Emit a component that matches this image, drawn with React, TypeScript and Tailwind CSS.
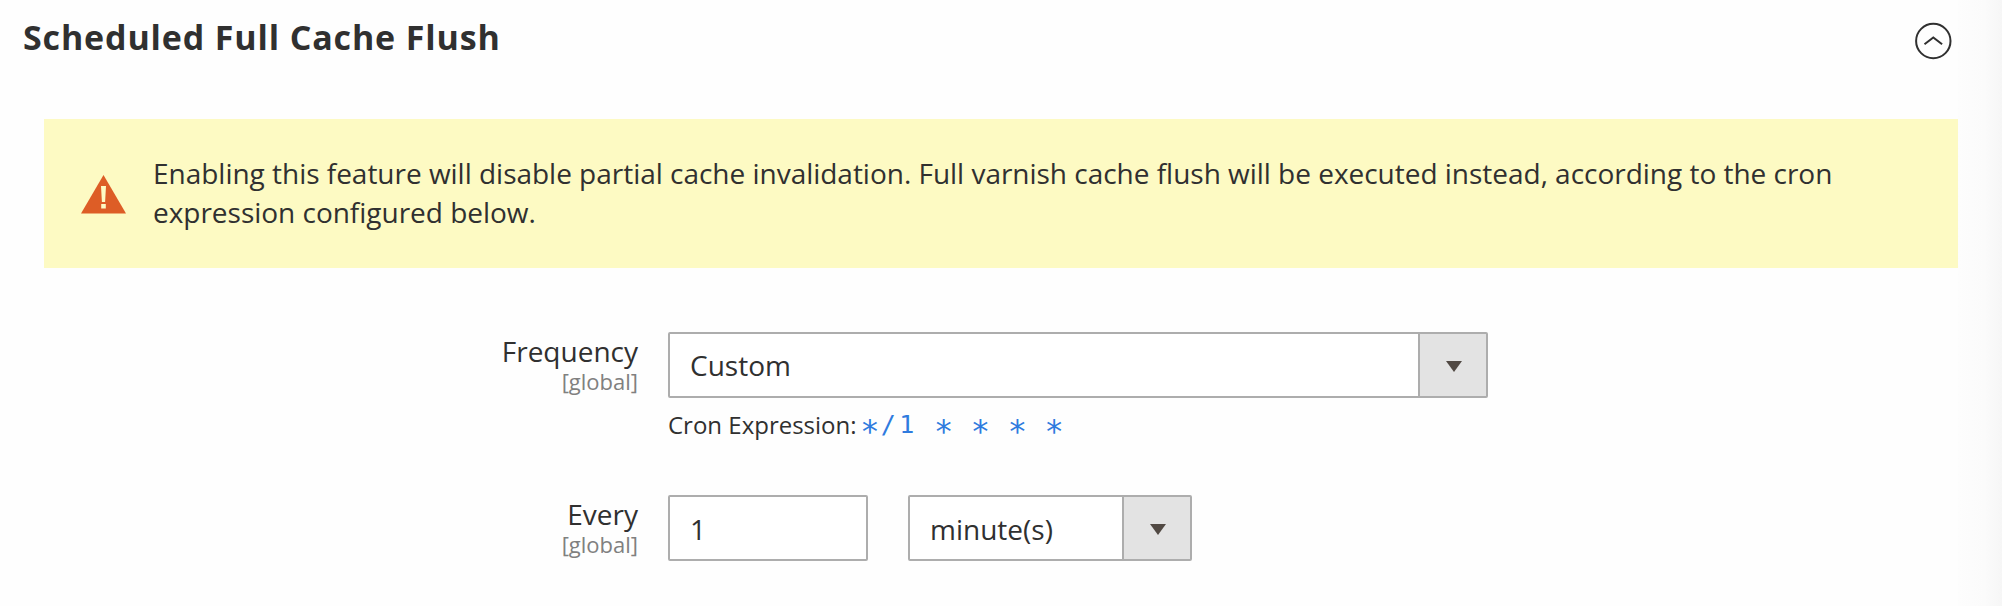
import React from 'react';

const cron = '*/1 * * * *';

function Caret() {
  return (
    <svg width="16" height="11" viewBox="0 0 16 11" fill="#514943">
      <path d="M0 0h16L8 11z" />
    </svg>
  );
}

function Select({ value, className }: { value: string; className: string }) {
  return (
    <button
      type="button"
      className={`flex h-[66px] items-stretch rounded-[2px] border-2 border-[#adadad] bg-white text-left ${className}`}
    >
      <span className="flex-1 pl-[20px]">{value}</span>
      <span className="flex w-[68px] items-center justify-center border-l-2 border-[#adadad] bg-[#e3e3e3] pt-[3px] pl-[2px]">
        <Caret />
      </span>
    </button>
  );
}

function Label({ text }: { text: string }) {
  return (
    <div className="flex w-[638px] flex-col items-end pt-[2px]">
      <span className="leading-[34px]">{text}</span>
      <span className="text-[22px] leading-[26px] text-[#808080]">[global]</span>
    </div>
  );
}

export default function App() {
  return (
    <div className="flex h-[606px] w-[2002px] bg-[#fefefe] font-['Open_Sans',sans-serif] text-[28px] text-[#303030]">
      <main className="w-[1958px] shrink-0">
        <header className="flex h-[119px] items-start justify-between pl-[23px] pr-[6px]">
          <h2 className="pt-[14px] text-[34px] leading-[46px] font-bold tracking-[0.85px]">
            Scheduled Full Cache Flush
          </h2>
          <svg className="mt-[22px]" width="38" height="38" viewBox="0 0 38 38" fill="none" stroke="#303030" strokeWidth="2">
            <circle cx="19.3" cy="19" r="17.2" />
            <path d="M10.5 22.2l8.8-6.8 8.8 6.8" />
          </svg>
        </header>
        <section className="ml-[44px] flex h-[149px] w-[1914px] bg-[#fdfac3] pt-[35px]">
          <svg className="mt-[21px] ml-[37px] shrink-0" width="45" height="39" viewBox="0 0 45 39">
            <path d="M22.5 0L45 38.5H0z" fill="#dd5d26" />
            <path d="M20 11h5l-.9 16h-3.2zM20.2 29h4.6v4.6h-4.6z" fill="#fdfac3" />
          </svg>
          <p className="ml-[27px] w-[1720px] leading-[39.2px] tracking-[-0.02px]">
            Enabling this feature will disable partial cache invalidation. Full varnish cache flush will be executed
            instead, according to the cron expression configured below.
          </p>
        </section>
        <div className="mt-[64px] flex h-[163px] gap-[30px]">
          <Label text="Frequency" />
          <div>
            <Select value="Custom" className="w-[820px] leading-[62px]" />
            <p className="mt-[10px] flex text-[24px] leading-[34px]">
              Cron Expression:
              <span className="ml-[4px] flex font-['DejaVu_Sans_Mono',monospace] text-[#2f7bde]">
                {cron.split('').map((char, i) => (
                  <span
                    key={i}
                    className={
                      char === '*'
                        ? 'flex h-[34px] w-[18.45px] justify-center text-[32px] leading-[47px]'
                        : 'flex h-[34px] w-[18.45px] justify-center text-[25px] leading-[34px]'
                    }
                  >
                    {char}
                  </span>
                ))}
              </span>
            </p>
          </div>
        </div>
        <div className="flex gap-[30px]">
          <Label text="Every" />
          <div className="flex gap-[40px]">
            <input
              className="h-[66px] w-[200px] rounded-[2px] border-2 border-[#adadad] bg-white pt-[2px] pl-[20px] outline-none"
              defaultValue="1"
            />
            <Select value="minute(s)" className="w-[284px] leading-[64px]" />
          </div>
        </div>
      </main>
      <div className="flex-1 bg-linear-to-r from-[#fdfdfd] via-[#fbfbfb] via-60% to-[#f6f6f6]" />
    </div>
  );
}
